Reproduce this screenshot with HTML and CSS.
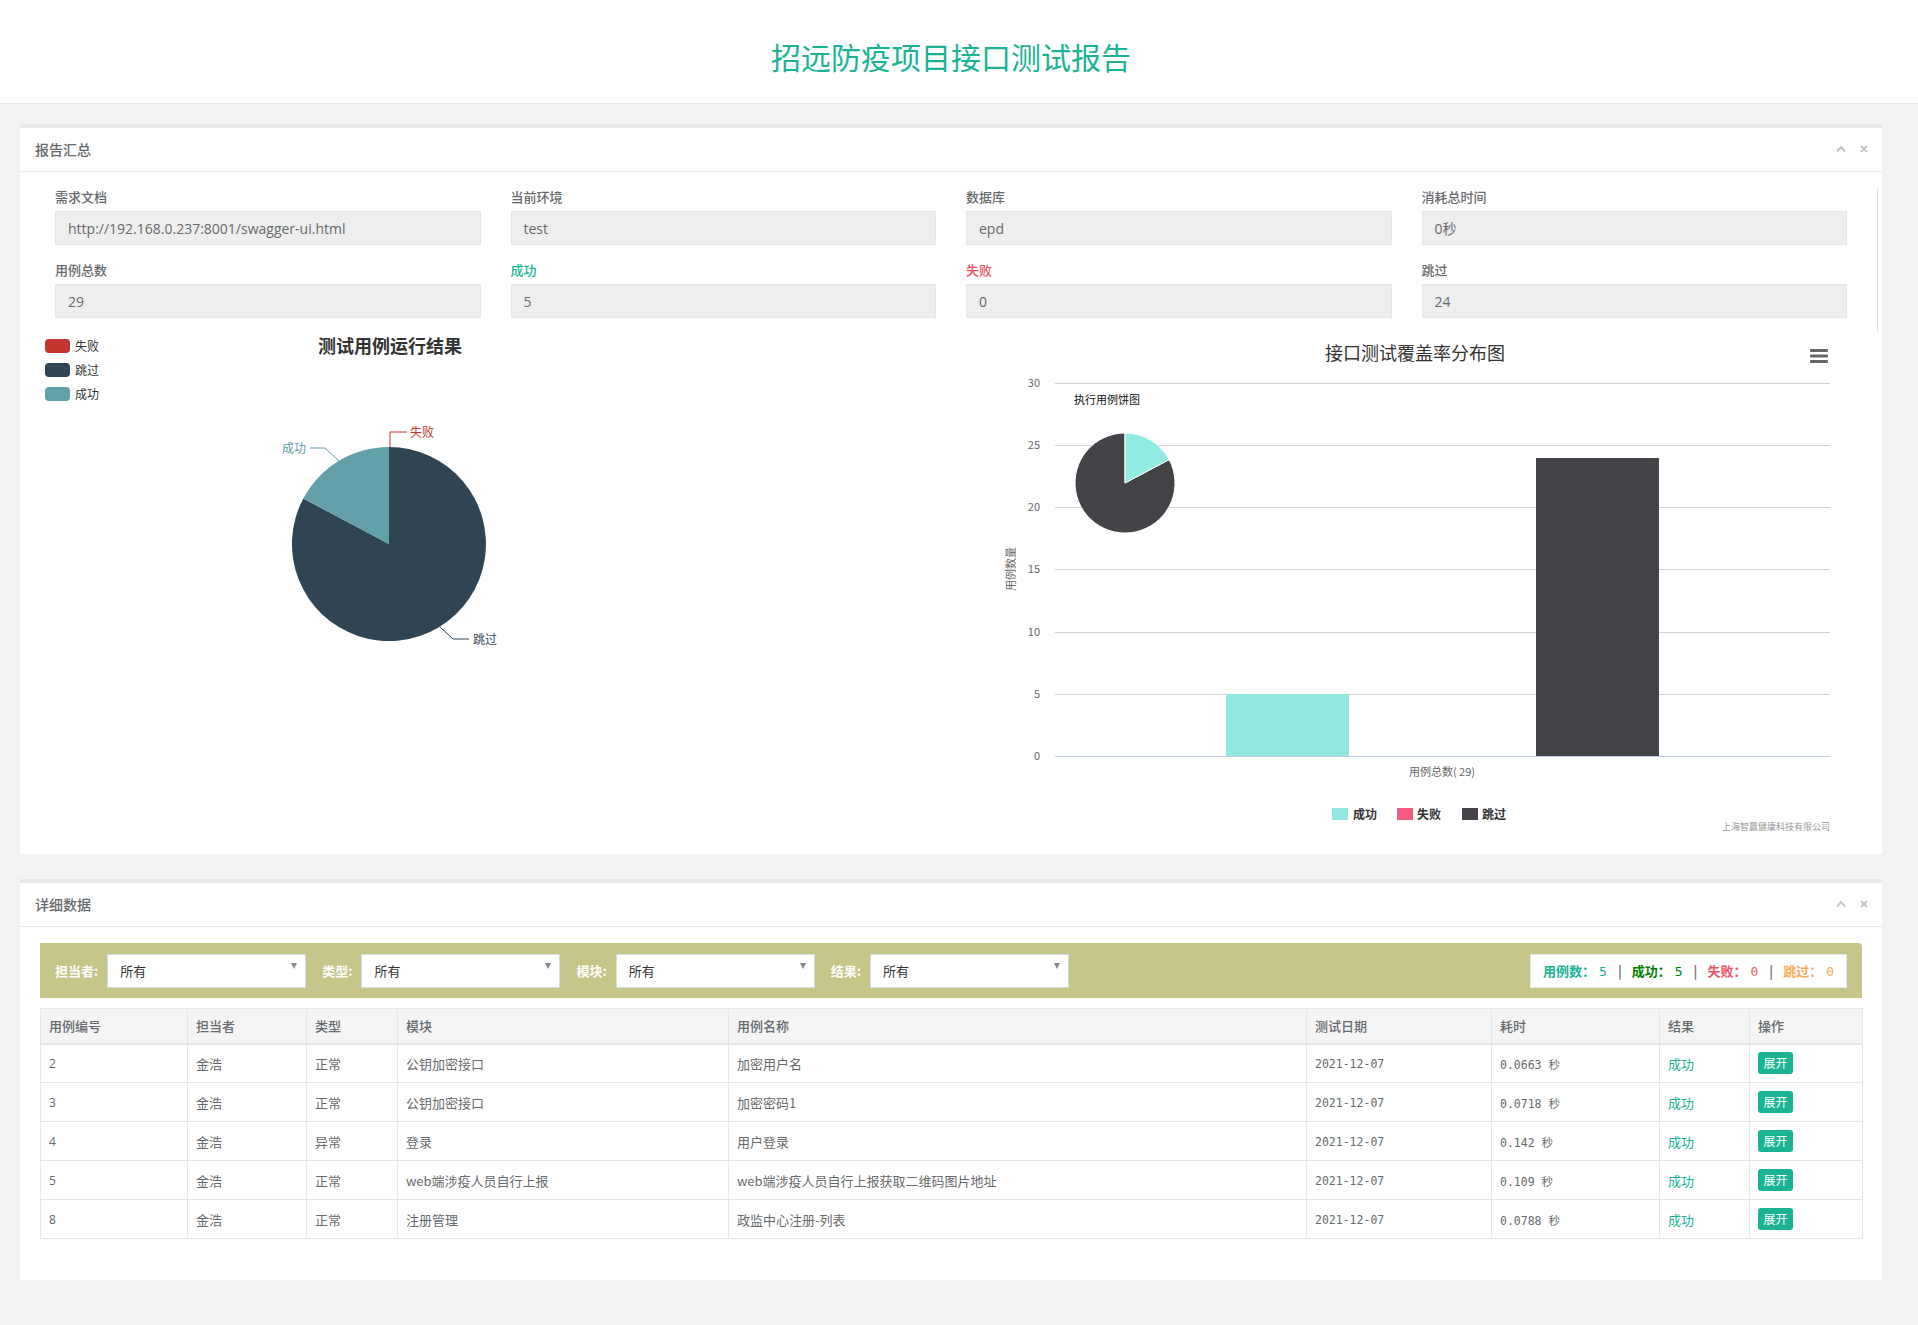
FILE: index.html
```html
<!DOCTYPE html>
<html lang="zh-CN">
<head>
<meta charset="utf-8">
<title>招远防疫项目接口测试报告</title>
<link rel="stylesheet" href="styles.css">
</head>
<body>
<header class="top"><h1>招远防疫项目接口测试报告</h1></header>
<main class="wrap">
  <section class="ibox">
    <div class="ibox-title">
      <h5>报告汇总</h5>
      <div class="tools">
        <svg width="10" height="8" viewBox="0 0 10 8"><path d="M1 6.5 L5 2 L9 6.5" fill="none" stroke="#c6c6c6" stroke-width="2"/></svg>
        <svg width="8" height="8" viewBox="0 0 8 8"><path d="M1 1 L7 7 M7 1 L1 7" fill="none" stroke="#c6c6c6" stroke-width="1.8"/></svg>
      </div>
    </div>
    <div class="ibox-content summary">
      <div class="rail"></div>
      <div class="fields">
        <div class="field"><label>需求文档</label><div class="input">http://192.168.0.237:8001/swagger-ui.html</div></div>
        <div class="field"><label>当前环境</label><div class="input">test</div></div>
        <div class="field"><label>数据库</label><div class="input">epd</div></div>
        <div class="field"><label>消耗总时间</label><div class="input">0秒</div></div>
        <div class="field"><label>用例总数</label><div class="input">29</div></div>
        <div class="field"><label class="ok">成功</label><div class="input">5</div></div>
        <div class="field"><label class="bad">失败</label><div class="input">0</div></div>
        <div class="field"><label>跳过</label><div class="input">24</div></div>
      </div>
      <div class="charts">
        <svg class="chart-left" width="700" height="506" viewBox="0 0 700 506">
          <rect x="5" y="11" width="25" height="14" rx="4" fill="#c23531"/>
          <text x="35" y="22.5" class="lg">失败</text>
          <rect x="5" y="35" width="25" height="14" rx="4" fill="#2f4554"/>
          <text x="35" y="46.5" class="lg">跳过</text>
          <rect x="5" y="59" width="25" height="14" rx="4" fill="#61a0a8"/>
          <text x="35" y="70.5" class="lg">成功</text>
          <text x="350" y="25" class="pie-title" text-anchor="middle">测试用例运行结果</text>
          <path d="M349 216 L349 119 A97 97 0 1 1 263.3 170.5 Z" fill="#2f4554"/>
          <path d="M349 216 L263.3 170.5 A97 97 0 0 1 349 119 Z" fill="#61a0a8"/>
          <path d="M350 119 L350 104 L367 104" fill="none" stroke="#c23531" stroke-width="1"/>
          <text x="370" y="108.5" class="pl" fill="#c23531">失败</text>
          <path d="M299 133 L285 120 L270 120" fill="none" stroke="#61a0a8" stroke-width="1"/>
          <text x="266" y="124.5" class="pl" fill="#61a0a8" text-anchor="end">成功</text>
          <path d="M400 299 L413 311 L429 311" fill="none" stroke="#2f4554" stroke-width="1"/>
          <text x="433" y="315.5" class="pl" fill="#2f4554">跳过</text>
        </svg>
        <svg class="chart-right" width="850" height="506" viewBox="0 0 850 506">
          <text x="425" y="32" class="bar-title" text-anchor="middle">接口测试覆盖率分布图</text>
          <rect x="820" y="21" width="18" height="3" rx="1" fill="#666"/>
          <rect x="820" y="26.5" width="18" height="3" rx="1" fill="#666"/>
          <rect x="820" y="32" width="18" height="3" rx="1" fill="#666"/>
          <g stroke="#d2d2d2" stroke-width="1">
            <line x1="65" y1="55.5" x2="840" y2="55.5"/>
            <line x1="65" y1="117.5" x2="840" y2="117.5"/>
            <line x1="65" y1="179.5" x2="840" y2="179.5"/>
            <line x1="65" y1="241.5" x2="840" y2="241.5"/>
            <line x1="65" y1="304.5" x2="840" y2="304.5"/>
            <line x1="65" y1="366.5" x2="840" y2="366.5"/>
          </g>
          <g class="ax" text-anchor="end">
            <text x="50" y="59">30</text>
            <text x="50" y="121">25</text>
            <text x="50" y="183">20</text>
            <text x="50" y="245">15</text>
            <text x="50" y="308">10</text>
            <text x="50" y="370">5</text>
            <text x="50" y="432">0</text>
          </g>
          <text class="ax" x="0" y="0" text-anchor="middle" transform="translate(25 241) rotate(-90)">用例数量</text>
          <rect x="236" y="366" width="123" height="62" fill="#90e8e0"/>
          <rect x="546" y="130" width="123" height="298" fill="#434348"/>
          <line x1="65" y1="428.5" x2="840" y2="428.5" stroke="#c0d0e0" stroke-width="1"/>
          <text class="ax" x="452" y="448" text-anchor="middle">用例总数( 29)</text>
          <rect x="342" y="480" width="16" height="12" fill="#90e8e0"/>
          <text class="lgb" x="363" y="490.5">成功</text>
          <rect x="407" y="480" width="16" height="12" fill="#f15c80"/>
          <text class="lgb" x="427" y="490.5">失败</text>
          <rect x="472" y="480" width="16" height="12" fill="#434348"/>
          <text class="lgb" x="492" y="490.5">跳过</text>
          <text class="credit" x="840" y="502" text-anchor="end">上海智赢健康科技有限公司</text>
          <text class="sub" x="84" y="76">执行用例饼图</text>
          <path d="M135 155 L179.2 131.6 A50 50 0 1 1 135 105 Z" fill="#434348" stroke="#fff" stroke-width="1"/>
          <path d="M135 155 L135 105 A50 50 0 0 1 179.2 131.6 Z" fill="#90ebe2" stroke="#fff" stroke-width="1"/>
        </svg>
      </div>
    </div>
  </section>

  <section class="ibox">
    <div class="ibox-title">
      <h5>详细数据</h5>
      <div class="tools">
        <svg width="10" height="8" viewBox="0 0 10 8"><path d="M1 6.5 L5 2 L9 6.5" fill="none" stroke="#c6c6c6" stroke-width="2"/></svg>
        <svg width="8" height="8" viewBox="0 0 8 8"><path d="M1 1 L7 7 M7 1 L1 7" fill="none" stroke="#c6c6c6" stroke-width="1.8"/></svg>
      </div>
    </div>
    <div class="ibox-content detail">
      <div class="filter">
        <span class="flabel">担当者:</span>
        <div class="select"><span>所有</span><i class="caret"></i></div>
        <span class="flabel">类型:</span>
        <div class="select"><span>所有</span><i class="caret"></i></div>
        <span class="flabel">模块:</span>
        <div class="select"><span>所有</span><i class="caret"></i></div>
        <span class="flabel">结果:</span>
        <div class="select"><span>所有</span><i class="caret"></i></div>
        <div class="stats">
          <span class="st total">用例数：<b>5</b></span><span class="sep">|</span>
          <span class="st pass">成功：<b>5</b></span><span class="sep">|</span>
          <span class="st fail">失败：<b>0</b></span><span class="sep">|</span>
          <span class="st skip">跳过：<b>0</b></span>
        </div>
      </div>
      <table class="grid">
        <colgroup>
          <col class="c1"><col class="c2"><col class="c3"><col class="c4"><col class="c5"><col class="c6"><col class="c7"><col class="c8"><col class="c9">
        </colgroup>
        <thead>
          <tr><th>用例编号</th><th>担当者</th><th>类型</th><th>模块</th><th>用例名称</th><th>测试日期</th><th>耗时</th><th>结果</th><th>操作</th></tr>
        </thead>
        <tbody>
          <tr><td class="num">2</td><td>金浩</td><td>正常</td><td>公钥加密接口</td><td>加密用户名</td><td class="mono">2021-12-07</td><td class="mono">0.0663 秒</td><td class="res">成功</td><td><span class="btn">展开</span></td></tr>
          <tr><td class="num">3</td><td>金浩</td><td>正常</td><td>公钥加密接口</td><td>加密密码1</td><td class="mono">2021-12-07</td><td class="mono">0.0718 秒</td><td class="res">成功</td><td><span class="btn">展开</span></td></tr>
          <tr><td class="num">4</td><td>金浩</td><td>异常</td><td>登录</td><td>用户登录</td><td class="mono">2021-12-07</td><td class="mono">0.142 秒</td><td class="res">成功</td><td><span class="btn">展开</span></td></tr>
          <tr><td class="num">5</td><td>金浩</td><td>正常</td><td>web端涉疫人员自行上报</td><td>web端涉疫人员自行上报获取二维码图片地址</td><td class="mono">2021-12-07</td><td class="mono">0.109 秒</td><td class="res">成功</td><td><span class="btn">展开</span></td></tr>
          <tr><td class="num">8</td><td>金浩</td><td>正常</td><td>注册管理</td><td>政监中心注册-列表</td><td class="mono">2021-12-07</td><td class="mono">0.0788 秒</td><td class="res">成功</td><td><span class="btn">展开</span></td></tr>
        </tbody>
      </table>
    </div>
  </section>
</main>
</body>
</html>
```

FILE: styles.css
```css
* { box-sizing: border-box; }
body {
  margin: 0;
  background: #f3f3f4;
  font-family: "Open Sans", "Noto Sans CJK SC", sans-serif;
  font-size: 13px;
  color: #676a6c;
}
.top {
  background: #fff;
  height: 104px;
  border-bottom: 1px solid #e7eaec;
  padding: 36px 16px 0 0;
  text-align: center;
}
.top h1 {
  margin: 0;
  font-family: "Noto Sans CJK SC", sans-serif;
  font-size: 30px;
  font-weight: 400;
  line-height: 40px;
  color: #1ab394;
}
.wrap { padding: 20px 36px 45px 20px; }
.ibox {
  background: #fff;
  border-top: 4px solid #e7eaec;
}
.ibox + .ibox { margin-top: 25px; }
.ibox-title {
  height: 44px;
  border-bottom: 1px solid #e7eaec;
  display: flex;
  align-items: center;
  justify-content: space-between;
  padding: 0 14px 1px 15px;
}
.ibox-title h5 {
  margin: 0;
  font-family: "Noto Sans CJK SC", sans-serif;
  font-size: 14px;
  font-weight: 500;
  color: #676a6c;
}
.tools { display: flex; align-items: center; gap: 14px; }
.tools svg { display: block; }

.ibox-content { position: relative; }
.summary { padding: 16px 20px 20px; }
.rail {
  position: absolute;
  right: 4px;
  top: 15px;
  width: 1px;
  height: 145px;
  background: #e3e3e3;
}
.fields {
  display: grid;
  grid-template-columns: repeat(4, 1fr);
  row-gap: 16px;
}
.field { padding: 0 15px; }
.field label {
  display: block;
  font-family: "Noto Sans CJK SC", sans-serif;
  font-size: 13px;
  font-weight: 500;
  line-height: 18px;
  margin-bottom: 5px;
  color: #676a6c;
}
.field label.ok { color: #1ab394; }
.field label.bad { color: #ed5565; }
.input {
  height: 34px;
  background: #eeeeee;
  border: 1px solid #e5e6e7;
  padding: 0 12px;
  display: flex;
  align-items: center;
  font-size: 14px;
  color: #676a6c;
}
.charts {
  display: flex;
  justify-content: space-between;
  margin-top: 10px;
  padding-right: 22px;
  height: 506px;
}
.charts svg { display: block; font-family: "Noto Sans CJK SC", sans-serif; }
.lg { font-size: 12px; fill: #333; }
.pie-title { font-size: 18px; font-weight: 700; fill: #333; }
.pl { font-size: 12px; }
.bar-title { font-size: 18px; fill: #333; }
.ax { font-size: 11px; fill: #666; }
.lgb { font-size: 12px; font-weight: 700; fill: #333; }
.credit { font-size: 9px; fill: #999; }
.sub { font-size: 11px; fill: #111; }

.detail { padding: 16px 20px 41px; }
.filter {
  height: 55px;
  background: #c6c58a;
  border-radius: 0 4px 0 0;
  display: flex;
  align-items: center;
  padding: 0 15px;
}
.flabel {
  font-family: "Noto Sans CJK SC", sans-serif;
  font-weight: 700;
  font-size: 13px;
  color: #fff;
  margin-right: 9px;
}
.select + .flabel { margin-left: 16px; }
.select {
  width: 199px;
  height: 34px;
  background: #fff;
  border: 1px solid #d4dce6;
  display: flex;
  justify-content: space-between;
  padding: 0 8px 0 12px;
  font-size: 13px;
  color: #333;
}
.select span { align-self: center; }
.caret {
  margin-top: 8px;
  width: 0;
  height: 0;
  border-left: 3px solid transparent;
  border-right: 3px solid transparent;
  border-top: 6px solid #888;
}
.stats {
  margin-left: auto;
  height: 34px;
  background: #fff;
  border: 1px solid #e7eaec;
  display: flex;
  align-items: center;
  padding: 0 12px;
  font-family: "Noto Sans CJK SC", sans-serif;
  font-size: 13px;
  font-weight: 700;
}
.st b {
  font-family: "DejaVu Sans Mono", monospace;
  font-weight: 400;
  font-size: 13px;
  margin-left: 4px;
}
.total { color: #1ab394; }
.pass { color: #008000; }
.fail { color: #ed5565; }
.skip { color: #f8ac59; }
.sep { color: #777; margin: 0 10px 0 11px; font-weight: 700; }

.grid {
  width: 100%;
  margin-top: 10px;
  border-collapse: collapse;
  table-layout: fixed;
  font-family: "Noto Sans CJK SC", sans-serif;
}
.c1 { width: 147px; }
.c2 { width: 119px; }
.c3 { width: 91px; }
.c4 { width: 331px; }
.c5 { width: 578px; }
.c6 { width: 185px; }
.c7 { width: 168px; }
.c8 { width: 90px; }
.c9 { width: 113px; }
.grid th {
  height: 35px;
  background: #f5f5f6;
  border: 1px solid #e7e7e7;
  border-bottom: 2px solid #e7e7e7;
  padding: 0 8px;
  text-align: left;
  font-size: 13px;
  font-weight: 500;
  color: #676a6c;
}
.grid td {
  height: 39px;
  border: 1px solid #e7e7e7;
  padding: 0 8px;
  font-size: 13px;
  color: #676a6c;
  white-space: nowrap;
}
.grid td.num { font-family: "Open Sans", sans-serif; font-size: 12px; }
.grid td.mono { font-family: "DejaVu Sans Mono", "Noto Sans CJK SC", monospace; font-size: 11.5px; padding-top: 2px; }
.grid td.res { color: #1ab394; }
.btn {
  display: inline-block;
  width: 35px;
  height: 22px;
  line-height: 22px;
  text-align: center;
  background: #1ab394;
  color: #fff;
  border-radius: 3px;
  font-size: 12px;
}
```
